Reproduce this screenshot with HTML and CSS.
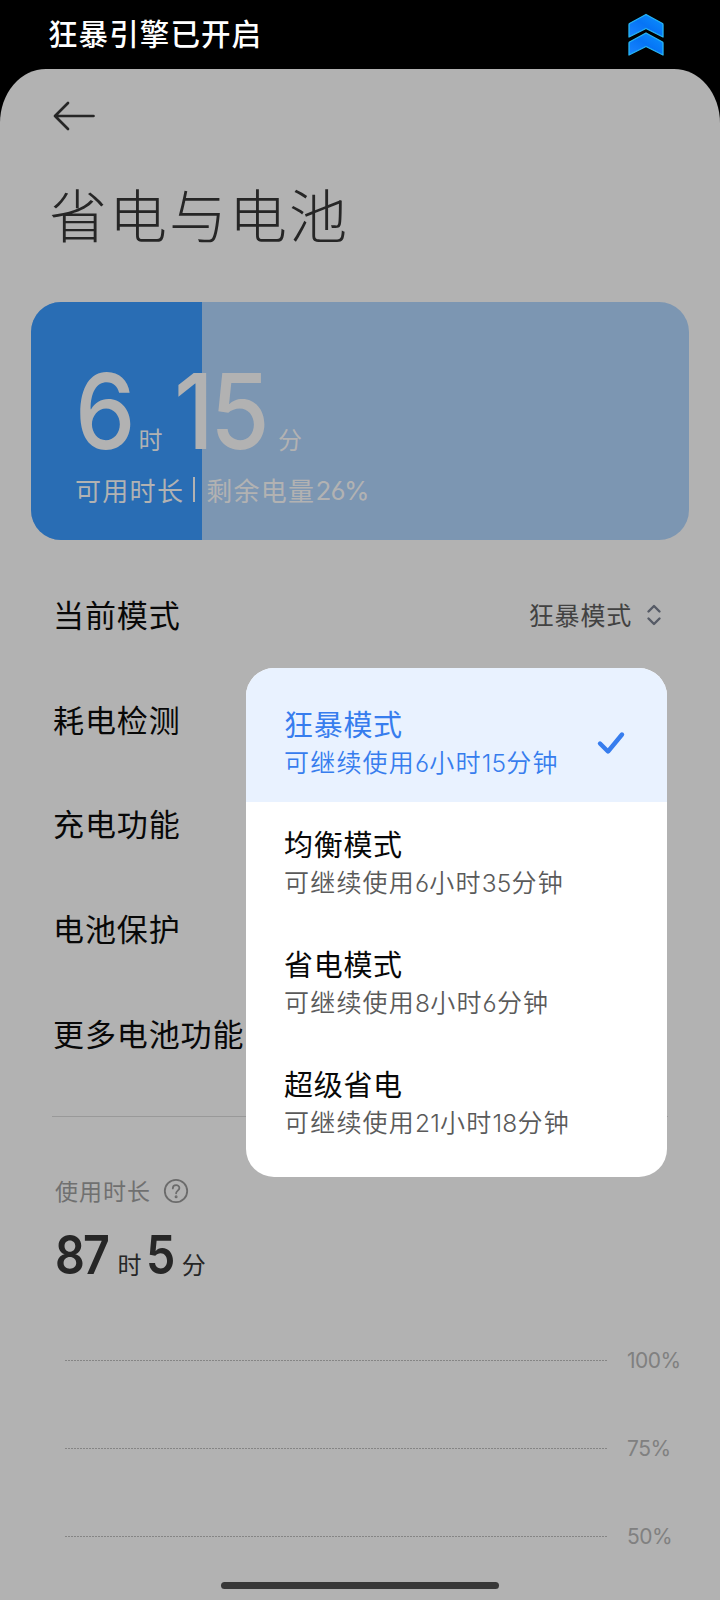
FILE: index.html
```html
<!DOCTYPE html>
<html lang="zh-CN">
<head>
<meta charset="utf-8">
<title>省电与电池</title>
<link rel="stylesheet" href="styles.css">
</head>
<body>
<div class="status">
  <span class="status-text">狂暴引擎已开启</span>
  <svg class="boost" width="38" height="44" viewBox="0 0 38 44">
    <defs><linearGradient id="g" x1="0" y1="1" x2="1" y2="0"><stop offset="0" stop-color="#1a86ff"/><stop offset=".5" stop-color="#0674f5"/><stop offset="1" stop-color="#0b93ff"/></linearGradient></defs>
    <g fill="url(#g)" stroke="#27b5f5" stroke-width="1.3" stroke-linejoin="round">
      <path d="M19 1.5 35.5 10.5Q36 11 36 12V24L19 15.500 2 24V12Q2 11 2.500 10.500Z"/>
      <path d="M19 20 35.500 29Q36 29.500 36 30.500V42L19 33.500 2 42V30.500Q2 29.500 2.500 29Z"/>
    </g>
  </svg>
</div>
<main class="sheet">
  <svg class="back" width="44" height="32" viewBox="0 0 44 32" fill="none" stroke="#262626" stroke-width="2.700" stroke-linecap="round" stroke-linejoin="round"><path d="M41.500 16H3M16 3 3 16l13 13"/></svg>
  <h1 class="title">省电与电池</h1>
  <section class="battery">
    <div class="level" style="width:26%"></div>
    <div class="battery-body">
      <div class="remain"><b>6</b><i>时</i><b class="minutes">15</b><i class="last">分</i></div>
      <div class="summary"><span class="avail">可用时长</span><span class="bar"></span><span>剩余电量</span><span class="num">26%</span></div>
    </div>
  </section>
  <ul class="settings">
    <li><span>当前模式</span><span class="value"><span>狂暴模式</span>
      <svg width="16" height="22" viewBox="0 0 16 22" fill="none" stroke="#565b66" stroke-width="2.400" stroke-linecap="round" stroke-linejoin="round"><path d="M2.500 7.500 8 2l5.500 5.500M2.500 14.500 8 20l5.500-5.500"/></svg></span></li>
    <li><span>耗电检测</span></li>
    <li><span>充电功能</span></li>
    <li><span>电池保护</span></li>
    <li><span>更多电池功能</span></li>
  </ul>
  <section class="usage">
    <div class="usage-label"><span>使用时长</span>
      <svg width="26" height="26" viewBox="0 0 26 26" fill="none" stroke="#6b6b6b" stroke-width="1.800" stroke-linecap="round"><circle cx="13" cy="13" r="11.200"/><path d="M9.800 10.400c0-4.300 6.600-4.300 6.600-.3 0 2.500-3.300 2.600-3.300 5.200"/><circle cx="13.100" cy="18.700" r=".6"/></svg>
    </div>
    <div class="usage-time"><b>87</b><i>时</i><b class="minutes">5</b><i class="last">分</i></div>
  </section>
  <section class="chart">
    <div class="tick"><span class="line"></span><span>100%</span></div>
    <div class="tick"><span class="line"></span><span>75%</span></div>
    <div class="tick"><span class="line"></span><span>50%</span></div>
  </section>
</main>
<div class="menu">
  <div class="option selected">
    <div><div class="name">狂暴模式</div><div class="desc">可继续使用<em>6</em>小时<em>15</em>分钟</div></div>
    <svg width="30" height="26" viewBox="0 0 30 26" fill="none" stroke="#377dee" stroke-width="4.400" stroke-linecap="round" stroke-linejoin="round"><path d="M4 13.500 12 21.500 26 4.500"/></svg>
  </div>
  <div class="option"><div class="name">均衡模式</div><div class="desc">可继续使用<em>6</em>小时<em>35</em>分钟</div></div>
  <div class="option"><div class="name">省电模式</div><div class="desc">可继续使用<em>8</em>小时<em>6</em>分钟</div></div>
  <div class="option"><div class="name">超级省电</div><div class="desc">可继续使用<em>21</em>小时<em>18</em>分钟</div></div>
</div>
<div class="home-bar"></div>
</body>
</html>
```
FILE: styles.css
```css
* { box-sizing: border-box; }
body {
  margin: 0;
  width: 720px;
  height: 1600px;
  overflow: hidden;
  position: relative;
  background: #000;
  font-family: "Noto Sans CJK SC", sans-serif;
}
b, i, em { font-style: normal; }
b, em, .num { font-feature-settings: "cv03"; }
svg { display: block; flex: none; }
.status {
  height: 69px;
  padding: 0 55px 0 48px;
  display: flex;
  justify-content: space-between;
  align-items: center;
}
.status-text {
  color: #fff;
  font-size: 29.5px;
  font-weight: 500;
  line-height: 40px;
  letter-spacing: 1.1px;
  padding-bottom: 5px;
}
.sheet {
  height: 1531px;
  background: #b2b2b2;
  border-radius: 46px 46px 0 0 / 54px 54px 0 0;
  padding: 31px 31px 0;
}
.back { margin-left: 21px; }
.title {
  margin: 42px 0 0 18px;
  height: 78px;
  line-height: 78px;
  font-size: 58px;
  font-weight: 300;
  letter-spacing: 2px;
  color: #262626;
}
.battery {
  margin-top: 50px;
  height: 238px;
  border-radius: 30px;
  overflow: hidden;
  background: #7c96b2;
  display: grid;
}
.level, .battery-body { grid-area: 1 / 1; }
.level { background: #296db4; }
.battery-body { padding: 54px 0 0 44px; color: #b2b2b2; }
.remain, .usage-time { display: flex; align-items: baseline; }
.remain b, .usage-time b { transform-origin: 0 50%; }
.remain { height: 110px; line-height: 110px; }
.remain b { font: 500 104px/110px Inter, sans-serif; letter-spacing: -4px; transform: scaleX(.924); }
.remain i { font-size: 24px; margin-left: 2px; }
.remain .minutes { margin-left: 11px; }
.remain .last { margin-left: 5px; }
.summary {
  display: flex;
  align-items: center;
  height: 40px;
  margin-top: 3px;
  font-size: 26px;
  letter-spacing: 1.3px;
}
.bar { width: 2px; height: 25px; background: #b2b2b2; margin: 1px 11px 0 9px; }
.num { font-family: Inter, sans-serif; letter-spacing: -.8px; margin-top: 2px; }
.settings {
  list-style: none;
  margin: 23px 0 0;
  padding: 0 27px 0 22px;
}
.settings li {
  height: 104.75px;
  display: flex;
  align-items: center;
  justify-content: space-between;
  font-size: 31px;
  letter-spacing: .9px;
  color: #080808;
}
.settings li span:not(.value) { padding-bottom: 4px; }
.value {
  display: flex;
  align-items: center;
  gap: 14px;
  font-size: 25px;
  letter-spacing: .8px;
  color: #424242;
}
.settings .value span:not(.value) { padding-bottom: 2px; }
.usage {
  margin: 29px 21px 0;
  border-top: 1px solid #999;
  padding-top: 56px;
}
.usage-label {
  display: flex;
  align-items: center;
  gap: 12px;
  height: 36px;
  padding-left: 3px;
  font-size: 23px;
  letter-spacing: 1px;
  color: #707070;
}
.usage-label span { padding-bottom: 2px; }
.usage-time { height: 64px; padding-left: 3px; margin-top: 14px; color: #262626; }
.usage-time b { font: 600 53px/64px Inter, sans-serif; letter-spacing: -2px; transform: scaleX(.88); }
.usage-time i { font-size: 24px; line-height: 64px; margin-left: 2px; }
.usage-time .minutes { margin-left: 5px; }
.usage-time .last { margin-left: 4px; }
.chart { margin: 30px 0 0 34px; }
.tick {
  height: 88px;
  display: flex;
  align-items: center;
  gap: 20px;
  font: 400 21px/24px Inter, sans-serif;
  letter-spacing: -.5px;
  color: #808080;
}
.line {
  width: 542px;
  height: 1px;
  background: repeating-linear-gradient(90deg, #858585 0 2px, #b2b2b2 2px 3px);
}
.menu {
  position: absolute;
  left: 246px;
  top: 668px;
  width: 421px;
  height: 509px;
  border-radius: 28px;
  overflow: hidden;
  background: #fff;
}
.option { height: 120px; padding: 21px 0 0 38px; color: #080808; }
.selected {
  height: 134px;
  padding: 35px 41px 0 38px;
  background: #e9f2ff;
  display: flex;
  justify-content: space-between;
}
.selected svg { margin-top: 27px; }
.name { font-size: 29px; line-height: 40px; font-weight: 400; letter-spacing: .7px; }
.desc { font-size: 25px; line-height: 36px; font-weight: 350; letter-spacing: 1.2px; color: #5a5a5a; white-space: nowrap; }
.desc em { font-family: Inter, sans-serif; font-size: 24.5px; letter-spacing: .2px; }
.selected .name, .selected .desc { color: #377dee; }
.home-bar {
  position: absolute;
  left: 221px;
  top: 1582px;
  width: 278px;
  height: 7px;
  border-radius: 4px;
  background: #383838;
}
```
